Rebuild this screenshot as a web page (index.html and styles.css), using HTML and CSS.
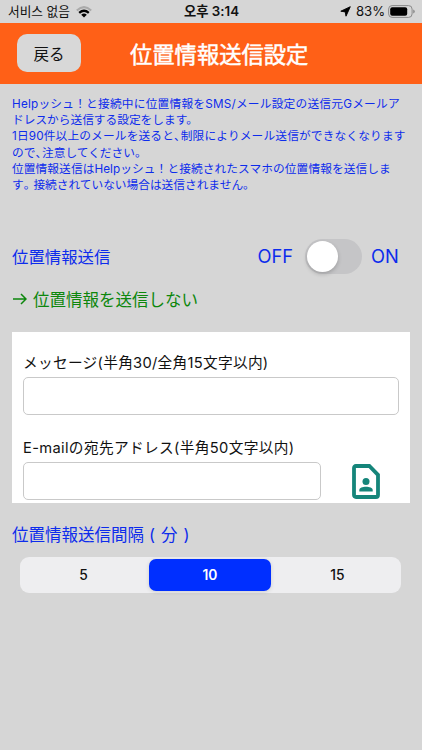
FILE: index.html
```html
<!DOCTYPE html>
<html lang="ja">
<head>
<meta charset="utf-8">
<title>位置情報送信設定</title>
<link rel="stylesheet" href="styles.css">
</head>
<body>
<div class="status">
  <div class="carrier"><span class="network" lang="ko">서비스 없음</span>
    <svg class="wifi" width="16" height="12" viewBox="0 0 16 12"><path d="M.8 4.4Q8-2.2 15.2 4.4" fill="none" stroke="#aaa" stroke-width="2"/><path d="M3.2 6.9Q8 2.7 12.8 6.9" fill="none" stroke="#000" stroke-width="2.3"/><path d="M5.2 8.8Q8 6.4 10.8 8.8L8 11.6Z"/></svg>
  </div>
  <span class="clock" lang="ko">오후 3:14</span>
  <div class="power">
    <svg width="11" height="11" viewBox="0 0 11 11"><path d="M10.3.7 6 10.2 5.2 5.9.8 5.2Z" stroke="#000" stroke-width=".9" stroke-linejoin="round"/></svg>
    <span class="percent">83%</span>
    <svg width="27" height="13" viewBox="0 0 27 13"><rect x=".6" y=".6" width="23.5" height="11.8" rx="3.5" fill="none" stroke="#8a8a8a"/><rect x="2.2" y="2.2" width="17" height="8.6" rx="2"/><path d="M25.2 4.5q1.6.5 1.6 2t-1.6 2Z" fill="#8a8a8a"/></svg>
  </div>
</div>
<header class="header">
  <button class="back">戻る</button>
  <h1 class="title">位置情報送信設定</h1>
</header>
<main class="main">
  <p class="intro">
    <span class="line l1">Helpッシュ！と接続中に位置情報をSMS/メール設定の送信元Gメールア</span>
    <span class="line l2">ドレスから送信する設定をします。</span>
    <span class="line l3">1日90件以上のメールを送ると<span class="tight">、</span>制限によりメール送信ができなくなります</span>
    <span class="line l4">ので<span class="tight">、</span>注意してください。</span>
    <span class="line l5">位置情報送信はHelpッシュ！と接続されたスマホの位置情報を送信しま</span>
    <span class="line l6">す<span class="snug">。</span>接続されていない場合は送信されません。</span>
  </p>
  <div class="toggle-row">
    <span class="label">位置情報送信</span>
    <span class="off">OFF</span>
    <span class="switch"><span class="knob"></span></span>
    <span class="on">ON</span>
  </div>
  <p class="state"><svg width="15" height="12" viewBox="0 0 15 12"><path d="M1 6H14M9 1 14 6 9 11" fill="none" stroke="#0c870c" stroke-width="1.5"/></svg><span>位置情報を送信しない</span></p>
  <section class="card">
    <label class="field-label message-label" for="message">メッセージ(半角30/全角15文字以内)</label>
    <input class="field" id="message" type="text">
    <label class="field-label email-label" for="email">E-mailの宛先アドレス(半角50文字以内)</label>
    <div class="email-row">
      <input class="field" id="email" type="text">
      <svg class="contact" width="28" height="35" viewBox="0 0 28 35"><path d="M4 2H17.3L26 10.8V31Q26 33 24 33H4Q2 33 2 31V4Q2 2 4 2Z" fill="none" stroke="#15857a" stroke-width="3.8"/><circle cx="14" cy="17.5" r="3.5" fill="#15857a"/><path d="M7.3 27.5V26C7.3 21.7 20.7 21.7 20.7 26V27.5Z" fill="#15857a"/></svg>
    </div>
  </section>
  <h2 class="interval-title">位置情報送信間隔<span class="paren open">(</span>分<span class="paren close">)</span></h2>
  <div class="segments">
    <span class="segment first">5</span>
    <span class="segment selected">10</span>
    <span class="segment">15</span>
  </div>
</main>
</body>
</html>
```
FILE: styles.css
```css
* { box-sizing: border-box; }
body {
  margin: 0;
  height: 750px;
  overflow: hidden;
  background: #d6d6d6;
  color: #111;
  font-family: Inter, "Noto Sans CJK JP", sans-serif;
}
h1, h2, p { margin: 0; font-weight: 400; }
.status {
  height: 23px;
  padding: 0 7px 0 8px;
  display: grid;
  grid-template-columns: 1fr auto 1fr;
  align-items: center;
  font-size: 13px;
  line-height: 23px;
  white-space: nowrap;
}
.status [lang="ko"] { font-family: Inter, "Noto Sans CJK KR", sans-serif; }
.carrier, .power { display: flex; align-items: center; }
.carrier { gap: 6px; }
.network { font-size: 12.7px; }
.wifi { margin-top: 1px; }
.clock { font-weight: 600; font-size: 13.3px; }
.power { justify-content: flex-end; gap: 4px; }
.percent { padding-left: 1px; font-size: 13.2px; letter-spacing: -0.1px; margin-right: -1px; }
.header {
  height: 61px;
  padding: 0 17px;
  display: flex;
  align-items: center;
  background: #ff6017;
}
.back {
  width: 64px;
  height: 38px;
  margin-bottom: 1px;
  padding: 0;
  border: 0;
  border-radius: 10px;
  background: #d8d8d8;
  color: #111;
  font: 15.5px/36px "Noto Sans CJK JP", sans-serif;
}
.title {
  margin: 3px 0 0 49px;
  color: #fff;
  font-size: 22.3px;
  -webkit-text-stroke: 0.5px #fff;
  line-height: 60px;
  white-space: nowrap;
}
.main { padding: 12px 12px 0; color: #0d2cec; }
.intro { font-size: 11.7px; line-height: 16.2px; }
.line { display: block; white-space: nowrap; }
.l1 { letter-spacing: 0.23px; }
.l3 { letter-spacing: 0.16px; }
.l5 { letter-spacing: 0.09px; }
.tight { letter-spacing: -5px; }
.snug { letter-spacing: -2px; }
.toggle-row {
  height: 36px;
  margin-top: 45px;
  display: flex;
  align-items: center;
  font-size: 16.4px;
}
.off { margin-left: auto; font-size: 18.3px; }
.switch {
  width: 57px;
  height: 35px;
  margin: 0 9px 0 12px;
  padding: 2px;
  border-radius: 18px;
  background: #c5c5c7;
}
.knob {
  display: block;
  width: 31px;
  height: 31px;
  border-radius: 50%;
  background: #fff;
  box-shadow: 0 2px 4px #0003;
}
.on { width: 39px; font-size: 18.3px; }
.state {
  height: 24px;
  margin-top: 13px;
  display: flex;
  align-items: center;
  gap: 6px;
  color: #0c870c;
  font-size: 16.5px;
}
.card {
  height: 171px;
  margin: 21px 0 0;
  width: 398px;
  padding: 20px 11px 0;
  background: #fff;
  color: #111;
}
.field-label {
  display: block;
  height: 25px;
  font-size: 14.7px;
  line-height: 22px;
  letter-spacing: 0.28px;
  white-space: nowrap;
}
.field {
  display: block;
  width: 376px;
  height: 38px;
  border: 1px solid #c9c9c9;
  border-radius: 5px;
  background: #fff;
}
.email-label { margin-top: 22px; letter-spacing: 0.34px; }
.email-row { display: flex; align-items: center; }
.email-row .field { width: 298px; }
.contact { margin-left: 31px; }
.interval-title { height: 24px; margin-top: 20px; font-size: 16.5px; line-height: 24px; white-space: nowrap; }
.open { margin: 0 6px 0 5px; }
.close { margin-left: 6px; }
.segments {
  width: 381px;
  height: 36px;
  margin: 10px 0 0 8px;
  padding: 2px;
  display: grid;
  grid-template-columns: 127px 122px 1fr;
  border-radius: 9px;
  background: #eeeef0;
  color: #111;
  font-size: 13.8px;
  font-weight: 500;
  line-height: 32px;
  text-align: center;
}
.first { padding-right: 4px; }
.segment:last-child { padding-left: 5px; }
.segments .selected { border-radius: 7px; background: #002fff; color: #fff; font-weight: 600; box-shadow: 0 1px 4px #0002; }
```
